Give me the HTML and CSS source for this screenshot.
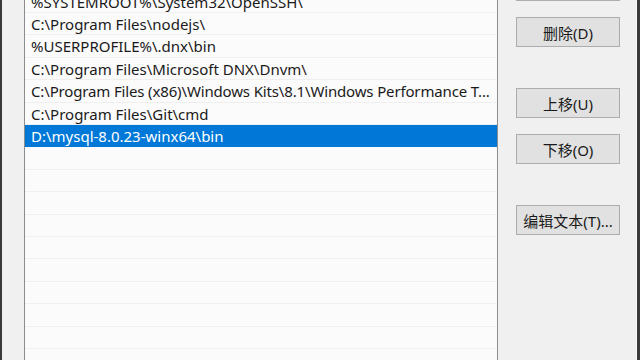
FILE: index.html
```html
<!DOCTYPE html>
<html lang="zh-CN">
<head>
<meta charset="UTF-8">
<meta name="viewport" content="width=device-width, initial-scale=1.0">
<title>编辑环境变量</title>
<link rel="stylesheet" href="styles.css">
</head>
<body>
    <div class="dialog">
        <div class="list">
            <div class="row">%SYSTEMROOT%\System32\OpenSSH\</div>
            <div class="row">C:\Program Files\nodejs\</div>
            <div class="row">%USERPROFILE%\.dnx\bin</div>
            <div class="row">C:\Program Files\Microsoft DNX\Dnvm\</div>
            <div class="row long">C:\Program Files (x86)\Windows Kits\8.1\Windows Performance T...</div>
            <div class="row">C:\Program Files\Git\cmd</div>
            <div class="row selected">D:\mysql-8.0.23-winx64\bin</div>
            <div class="row"></div>
            <div class="row"></div>
            <div class="row"></div>
            <div class="row"></div>
            <div class="row"></div>
            <div class="row"></div>
            <div class="row"></div>
            <div class="row"></div>
            <div class="row"></div>
            <div class="row"></div>
            <div class="row"></div>
        </div>
        <div class="side">
            <button class="btn">浏览(B)...</button>
            <button class="btn">删除(D)</button>
            <button class="btn group">上移(U)</button>
            <button class="btn">下移(O)</button>
            <button class="btn group">编辑文本(T)...</button>
        </div>
    </div>
</body>
</html>
```

FILE: styles.css
```css
body {
    margin: 0;
    width: 640px;
    height: 360px;
    overflow: hidden;
    background-color: #f0f0f0;
    font-family: "Noto Sans", "Noto Sans CJK SC", sans-serif;
    font-size: 15px;
    color: #1a1a1a;
}

.dialog {
    display: flex;
    align-items: flex-start;
    height: 360px;
    border-left: 2px solid #3a3a3a;
    border-right: 3px solid #3a3a3a;
    box-sizing: border-box;
    overflow: hidden;
}

.list {
    margin-top: -10.3px;
    margin-left: 22px;
    width: 474px;
    height: 400px;
    border: 1px solid #8c8c8c;
    background-color: #fcfbfc;
    box-sizing: border-box;
    overflow: hidden;
    flex-shrink: 0;
}

.row {
    height: 22.4px;
    line-height: 21px;
    padding: 1px 4px 0 6px;
    border-bottom: 1px solid #efefef;
    box-sizing: border-box;
    white-space: nowrap;
    overflow: hidden;
}

.row.long {
    letter-spacing: -0.15px;
}

.row.selected {
    background-color: #0078d7;
    border-bottom-color: #0078d7;
    color: #fff;
}

.side {
    display: flex;
    flex-direction: column;
    padding-left: 18px;
    margin-top: -29px;
    flex: 1;
    border-right: 1px solid #fafafa;
    height: 400px;
}

.btn {
    width: 104px;
    height: 30px;
    margin-bottom: 16px;
    padding: 0;
    font: inherit;
    color: #1a1a1a;
    background-color: #e1e1e1;
    border: 1px solid #adadad;
}

.btn.group {
    margin-top: 25px;
}
```
